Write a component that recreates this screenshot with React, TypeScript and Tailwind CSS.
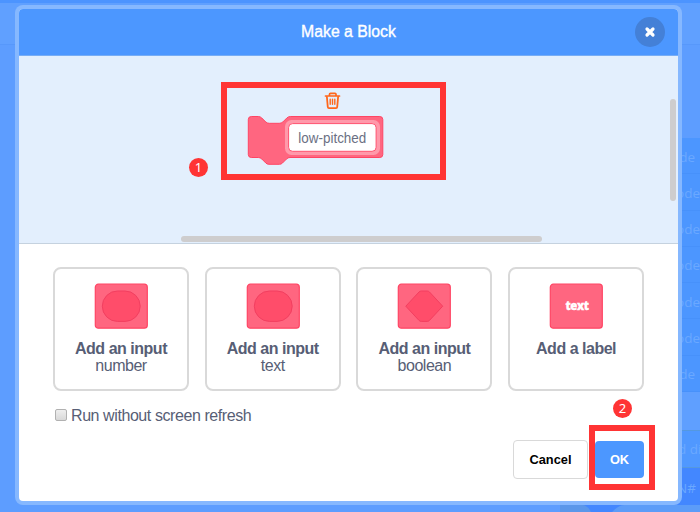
import React from "react";

type Shape = "oval" | "boolean" | "label";

function InputIcon({ shape }: { shape: Shape }) {
  return (
    <svg width="54" height="46" viewBox="0 0 54 46" className="block">
      <rect x="1.300" y="1.200" width="52" height="44" rx="3" fill="#ff6680" stroke="#ff4564" strokeWidth="1.2" />
      {shape === "oval" && (
        <path d="M23.5 8h7.5a15.2 15.2 0 0 1 0 30.4h-7.5a15.2 15.2 0 0 1 0-30.4Z" fill="#ff4d6a" stroke="#f23f60" strokeWidth="1" />
      )}
      {shape === "boolean" && (
        <path d="M8.800 23.200 22 9Q23 8 24.300 8h6Q31.500 8 32.500 9L45.700 23.200 32.500 37.400Q31.500 38.400 30.300 38.400h-6Q23 38.400 22 37.400Z" fill="#ff4d6a" stroke="#f23f60" strokeWidth="1" />
      )}
      {shape === "label" && (
        <text x="28" y="26.500" textAnchor="middle" textLength="23" lengthAdjust="spacingAndGlyphs" fill="#fff" stroke="#fff" strokeWidth="0.3" fontFamily="'Open Sans', 'Noto Sans', sans-serif" fontWeight="800" fontSize="12.500">
          text
        </text>
      )}
    </svg>
  );
}

function InputCard({ title, kind, shape }: { title: string; kind?: string; shape: Shape }) {
  return (
    <button className="flex h-[124px] w-[136px] flex-col items-center rounded-lg border-2 border-[#d9d9d9] bg-white pt-[14px] text-[16px] leading-[18px] tracking-[-0.480px] text-[#575e75]">
      <InputIcon shape={shape} />
      <span className="mt-[10.500px] font-bold whitespace-nowrap">{title}</span>
      {kind && <span className="-mt-px">{kind}</span>}
    </button>
  );
}

function Marker({ label, className }: { label: string; className: string }) {
  return (
    <span className={`absolute flex size-[19px] items-center justify-center rounded-full bg-[#ff3434] font-['Noto_Sans',sans-serif] text-[13px] leading-none text-white ${className}`}>
      {label}
    </span>
  );
}

function PrototypeBlock() {
  return (
    <svg width="138" height="75" viewBox="247 91 138 75" className="block">
      <g fill="none" stroke="#ff661a" strokeLinecap="round" strokeLinejoin="round">
        <path d="M325.500 96h14M329.500 95.500v-1.200q0-1 1-1h4.500q1 0 1 1v1.200" strokeWidth="1.700" />
        <path d="m326.900 97 .9 10q.1 1.200 1.200 1.200h7q1.100 0 1.200-1.200l.9-10" strokeWidth="1.800" />
        <path d="M330.200 99.200v5M332.500 99.200v5M334.800 99.200v5" strokeWidth="1.400" />
      </g>
      <path d="M248.300 119.500q0-3 3-3h7q2 0 3.500 1.500l4 4q1.500 1.300 3.500 1.300h10q2 0 3.500-1.300l4-4q1.500-1.500 3.500-1.500h89.500q3 0 3 3v35q0 3-3 3H290q-2 0-3.500 1.500l-4 4q-1.300 1.300-3 1.300h-10.500q-2 0-3.200-1.300l-4-4q-1.500-1.500-3.500-1.500h-7q-3 0-3-3Z" fill="#ff6680" stroke="#ff4564" />
      <rect x="285" y="120" width="95" height="35" rx="6.500" fill="#ff99aa" />
      <rect x="288.600" y="123.600" width="87.500" height="27.700" rx="4" fill="#fff" stroke="#ff5270" />
      <text x="332.300" y="142.600" textAnchor="middle" textLength="68" lengthAdjust="spacingAndGlyphs" fontFamily="'Liberation Sans', Arial, sans-serif" fontSize="14" fill="#6b7083">
        low-pitched
      </text>
    </svg>
  );
}

const menuRows = ["ode", "node", "node", "node", "node", "node", "ode"];

function Backdrop() {
  return (
    <div className="flex h-full flex-col bg-[#5d9dff]">
      <div className="h-[3px] shrink-0 bg-[#4c94ff]" />
      <div className="h-[42px] shrink-0 border-b border-[#5798fb] bg-[#60a0ff]" />
      <div className="flex flex-1 justify-end">
        <div className="flex w-[140px] flex-col pt-[93px] font-['Open_Sans','Noto_Sans',sans-serif] text-[13.500px] text-[#6aa8ff]">
          {menuRows.map((row, i) => (
            <div key={i} className={`flex h-[36.300px] items-center justify-end border-b border-[#4791fb] bg-[#4c96ff] pt-[2px] ${row === "ode" ? "pr-[5px]" : ""}`}>
              {row}
            </div>
          ))}
          <div className="h-[38px] shrink-0 bg-[#5f9fff]" />
          <div className="flex h-[38px] shrink-0 items-center border-y border-[#5598df] bg-[#5098ff] pl-[118px]">
            <span className="whitespace-nowrap">d dig</span>
          </div>
          <div className="flex h-[37px] shrink-0 items-center justify-end bg-[#4387ff] pt-[3px] pr-[4px]">N#</div>
          <div className="flex flex-1 bg-[#5b97ea]">
            <svg width="140" height="7" viewBox="0 0 140 7">
              <path d="M52 7q4-7 12-7h76v7Z" fill="#5c9cf8" />
              <path d="M23 0h41q-5 0-12 7H31Q28 1 23 0Z" fill="#4387ff" />
            </svg>
          </div>
        </div>
      </div>
    </div>
  );
}

export default function App() {
  return (
    <div className="relative h-[512px] w-[700px] overflow-hidden font-['Liberation_Sans',Arial,sans-serif]">
      <Backdrop />
      <div className="absolute top-[5px] left-[15px] h-[500px] w-[667px] rounded-[8px] bg-[#86b8ff] p-[4px]">
        <div className="flex h-full w-full flex-col overflow-hidden rounded-[4px] bg-white">
          <header className="grid h-[47px] shrink-0 grid-cols-[1fr_auto_1fr] items-center border-b border-[#77adf5] bg-[#4c97ff] pr-[13px] pl-[13px] text-white">
            <span />
            <h1 className="text-[15.800px] leading-none [-webkit-text-stroke:0.350px_white]">Make a Block</h1>
            <button className="flex size-[30px] items-center justify-center justify-self-end rounded-full bg-[#4480d7]" aria-label="Close">
              <svg width="12" height="12" viewBox="0 0 12 12">
                <path d="m3 3 6 6M9 3 3 9" stroke="white" strokeWidth="3.200" strokeLinecap="round" />
              </svg>
            </button>
          </header>
          <section className="relative h-[188px] shrink-0 border-b border-[#c5d2df] bg-[#e3effd] pt-[35px] pl-[228px]">
            <PrototypeBlock />
            <div className="absolute top-[26px] left-[202px] h-[98px] w-[225px] border-[6.500px] border-[#ff3434]" />
            <Marker label="1" className="top-[102px] left-[170px]" />
            <div className="absolute top-[43px] right-[2.500px] h-[102px] w-[6px] rounded-full bg-[#cecdce]" />
            <div className="absolute bottom-[1.500px] left-[162px] h-[6px] w-[361px] rounded-full bg-[#cecdce]" />
          </section>
          <div className="flex shrink-0 gap-[15.700px] pt-[23px] pl-[34px]">
            <InputCard title="Add an input" kind="number" shape="oval" />
            <InputCard title="Add an input" kind="text" shape="oval" />
            <InputCard title="Add an input" kind="boolean" shape="boolean" />
            <InputCard title="Add a label" shape="label" />
          </div>
          <label className="mt-[15px] flex h-[20px] shrink-0 items-center pl-[36px] text-[16px] tracking-[-0.420px] text-[#575e75]">
            <span className="mr-[4px] -mt-[2px] size-[12px] rounded-[2px] border border-[#b1b1b1] bg-gradient-to-b from-[#eeeeee] to-[#d8d8d8]" />
            Run without screen refresh
          </label>
          <div className="mt-[14px] flex shrink-0 items-center gap-[7px] pl-[494px] text-[12.800px] font-bold">
            <button className="h-[39px] w-[75px] rounded-[4px] border border-[#d9d9d9] bg-white text-black">Cancel</button>
            <button className="h-[37px] w-[49px] rounded-[4px] bg-[#4c97ff] text-white">OK</button>
          </div>
        </div>
        <div className="absolute top-[420px] left-[574px] h-[65px] w-[66px] border-[6.500px] border-[#ff3434]" />
        <Marker label="2" className="top-[394px] left-[598px]" />
      </div>
    </div>
  );
}
